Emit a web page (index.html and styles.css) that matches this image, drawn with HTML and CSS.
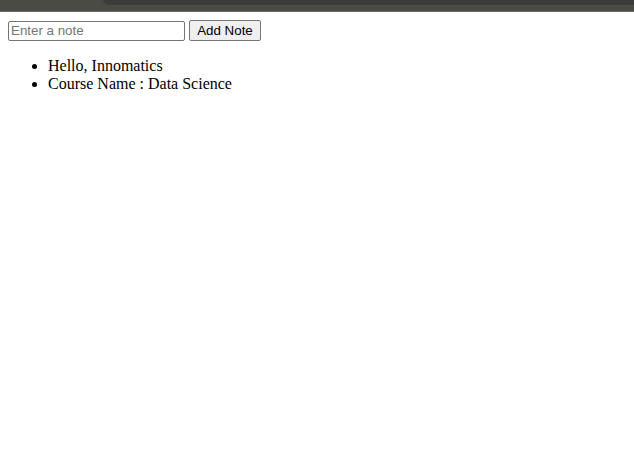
FILE: index.html
```html
<!DOCTYPE html>
<html>
<head>
<meta charset="utf-8">
<link rel="stylesheet" href="styles.css">
</head>
<body>
<div class="topbar"><div class="tab"></div></div>
<main class="content">
  <div class="form">
    <input class="note-input" type="text" placeholder="Enter a note">
    <button class="add-btn">Add Note</button>
  </div>
  <ul class="notes">
    <li>Hello, Innomatics</li>
    <li>Course Name : Data Science</li>
  </ul>
</main>
</body>
</html>
```
FILE: styles.css
```css
html, body {
  margin: 0;
  padding: 0;
  background: #fff;
}
body {
  font-family: "Liberation Serif", "Times New Roman", serif;
  font-size: 16px;
  color: #000;
}
.topbar {
  height: 11px;
  background: #4b4b45;
  border-bottom: 1px solid #6b6b64;
  position: relative;
  overflow: hidden;
}
.tab {
  position: absolute;
  left: 103px;
  right: 0;
  top: -10px;
  height: 15px;
  background: #3c3c3a;
  border-bottom-left-radius: 6px;
}
.content {
  padding: 8px;
}
.form {
  display: flex;
  align-items: center;
  gap: 4px;
  height: 21px;
}
.note-input {
  box-sizing: border-box;
  width: 177px;
  height: 20px;
  margin: 0;
  padding: 1px 2px;
  border: 1px solid #767676;
  border-radius: 2px;
  font-family: "Liberation Sans", Arial, sans-serif;
  font-size: 13.33px;
  color: #000;
  background: #fff;
}
.note-input::placeholder {
  color: #757575;
}
.add-btn {
  box-sizing: border-box;
  height: 21px;
  width: 72px;
  margin: 0;
  padding: 1px 6px;
  border: 1px solid #767676;
  border-radius: 2px;
  background: #efefef;
  font-family: "Liberation Sans", Arial, sans-serif;
  font-size: 13.33px;
  color: #000;
}
.notes {
  margin: 16px 0;
  padding-left: 40px;
  line-height: 18px;
}
```
